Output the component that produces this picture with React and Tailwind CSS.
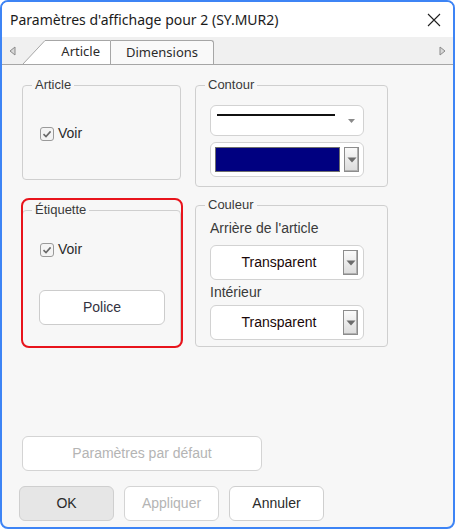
import React from "react";

const ui = { fontFamily: '"Liberation Sans", Arial, sans-serif' };
const seg = { fontFamily: '"Noto Sans", "Open Sans", sans-serif' };

function Check() {
  return (
    <span className="w-[14px] h-[14px] rounded-[3px] border border-[#9a9a9a] bg-[#f4f4f4] flex items-center justify-center">
      <svg width="10" height="10" viewBox="0 0 10 10">
        <path d="M1.5 5.2 L4 7.6 L8.6 2.4" fill="none" stroke="#6a6a6a" strokeWidth="1.6" />
      </svg>
    </span>
  );
}

function DropBtn() {
  return (
    <span className="w-[15px] h-[25px] border border-[#8c8c8c] bg-gradient-to-b from-[#fafafa] to-[#dcdcdc] flex items-center justify-center shadow-[inset_-1px_-1px_0_#b0b0b0]">
      <svg width="10" height="6" viewBox="0 0 10 6">
        <path d="M0.5 0.5 H9.5 L5 5.5 Z" fill="#6c6c6c" />
      </svg>
    </span>
  );
}

function Legend({ children }) {
  return (
    <legend className="ml-[9px] px-[3px] text-[13px] leading-[16px] text-[#3a3a3a]" style={ui}>
      {children}
    </legend>
  );
}

function ColorCombo({ text }) {
  return (
    <div className="ml-[14px] w-[154px] h-[35px] bg-white border border-[#d2d2d2] rounded-[6px] flex items-center pl-[4px]">
      <span className="flex-1 text-center text-[14px] text-[#1a0808]" style={ui}>{text}</span>
      <span className="mr-[5px]"><DropBtn /></span>
    </div>
  );
}

export default function App() {
  return (
    <div className="w-[455px] h-[529px] border-2 border-[#3d84f5] rounded-[8px] overflow-hidden flex flex-col bg-[#f7f7f7]">
      {/* Title bar */}
      <div className="h-[35px] bg-white flex items-center pl-[8px] pr-[12px] shrink-0">
        <span className="text-[14px] text-[#1b1b1b] flex-1" style={seg}>Paramètres d'affichage pour 2 (SY.MUR2)</span>
        <svg width="14" height="14" viewBox="0 0 14 14">
          <path d="M1 1 L13 13 M13 1 L1 13" stroke="#202020" strokeWidth="1.1" />
        </svg>
      </div>
      {/* Tab strip */}
      <div className="h-[28px] bg-[#f0f0f0] border-b border-[#a6a6a6] flex items-end shrink-0 relative">
        <span className="w-[21px] h-full flex items-center justify-center">
          <svg width="7" height="10" viewBox="0 0 7 10">
            <path d="M6 1 L1 5 L6 9 Z" fill="#d8d8d8" stroke="#8a8a8a" strokeWidth="1" />
          </svg>
        </span>
        <div className="relative h-[24px] w-[88px] flex items-center justify-end pr-[11px]">
          <svg className="absolute left-0 top-0" width="88" height="24" viewBox="0 0 88 24">
            <path d="M0 24 L22 0.5 H87.5 V24" fill="#ffffff" stroke="#a6a6a6" strokeWidth="1" />
          </svg>
          <span className="relative text-[13px] text-[#2b2b2b]" style={seg}>Article</span>
        </div>
        <div className="h-[24px] w-[103px] bg-[#f9f9f9] border border-b-0 border-l-0 border-[#a6a6a6] rounded-tr-[3px] flex items-center justify-center">
          <span className="text-[13px] text-[#2b2b2b]" style={seg}>Dimensions</span>
        </div>
        <span className="flex-1" />
        <span className="w-[22px] h-full flex items-center justify-center">
          <svg width="7" height="10" viewBox="0 0 7 10">
            <path d="M1 1 L6 5 L1 9 Z" fill="#d8d8d8" stroke="#8a8a8a" strokeWidth="1" />
          </svg>
        </span>
      </div>
      {/* Content */}
      <div className="flex-1 flex flex-col pl-[20px] pb-[6px]">
        <div className="flex gap-[14px]">
          {/* Left column */}
          <div className="w-[159px] flex flex-col">
            <fieldset className="mt-[12px] h-[103px] border border-[#cfcfcf] rounded-[4px]">
              <Legend>Article</Legend>
              <div className="flex items-center gap-[4px] ml-[17px] mt-[30px]">
                <Check />
                <span className="text-[14px] text-[#2a2a2a]" style={ui}>Voir</span>
              </div>
            </fieldset>
            <div className="relative mt-[22px]">
              <fieldset className="h-[145px] border border-[#cfcfcf] rounded-[4px]">
                <Legend>Étiquette</Legend>
                <div className="flex items-center gap-[4px] ml-[17px] mt-[21px]">
                  <Check />
                  <span className="text-[14px] text-[#2a2a2a]" style={ui}>Voir</span>
                </div>
                <button className="ml-[16px] mt-[30px] w-[126px] h-[35px] bg-white border border-[#cccccc] rounded-[6px] text-[14px] text-[#33333f]" style={ui}>
                  Police
                </button>
              </fieldset>
              <div className="absolute left-[-1px] top-[-4px] w-[162px] h-[150px] border-2 border-[#e8141c] rounded-[8px] pointer-events-none" />
            </div>
          </div>
          {/* Right column */}
          <div className="w-[193px] flex flex-col">
            <fieldset className="mt-[12px] h-[110px] border border-[#cfcfcf] rounded-[4px]">
              <Legend>Contour</Legend>
              <div className="ml-[14px] mt-[12px] w-[154px] h-[31px] bg-white border border-[#d2d2d2] rounded-[6px] flex items-start pt-[8px] pl-[6px]">
                <span className="w-[118px] h-[2px] bg-[#111]" />
                <svg className="ml-[13px] mt-[5px]" width="7" height="4" viewBox="0 0 7 4">
                  <path d="M0 0 H7 L3.5 4 Z" fill="#8a8a8a" />
                </svg>
              </div>
              <div className="ml-[14px] mt-[6px] w-[154px] h-[35px] bg-white border border-[#d2d2d2] rounded-[6px] flex items-center pl-[4px]">
                <span className="w-[125px] h-[25px] bg-[#000080] border border-[#6e6e6e]" />
                <span className="ml-[4px]"><DropBtn /></span>
              </div>
            </fieldset>
            <fieldset className="mt-[10px] h-[150px] border border-[#cfcfcf] rounded-[4px]">
              <Legend>Couleur</Legend>
              <div className="ml-[14px] mt-[6px] text-[14px] leading-[18px] text-[#3a3a3a]" style={ui}>Arrière de l'article</div>
              <div className="mt-[8px]"><ColorCombo text="Transparent" /></div>
              <div className="ml-[14px] mt-[3px] text-[14px] leading-[18px] text-[#3a3a3a]" style={ui}>Intérieur</div>
              <div className="mt-[4px]"><ColorCombo text="Transparent" /></div>
            </fieldset>
          </div>
        </div>
        <div className="flex-1" />
        <button className="w-[240px] h-[35px] bg-white border border-[#d4d4d4] rounded-[6px] text-[14px] text-[#b4b4b4]" style={ui}>
          Paramètres par défaut
        </button>
        <div className="flex gap-[10px] mt-[15px] ml-[-3px]">
          <button className="w-[95px] h-[35px] bg-[#e6e6e6] border border-[#cfcfcf] rounded-[6px] text-[14px] text-[#2a2a2a]" style={ui}>OK</button>
          <button className="w-[95px] h-[35px] bg-white border border-[#d4d4d4] rounded-[6px] text-[14px] text-[#b4b4b4]" style={ui}>Appliquer</button>
          <button className="w-[95px] h-[35px] bg-white border border-[#cfcfcf] rounded-[6px] text-[14px] text-[#2a2a2a]" style={ui}>Annuler</button>
        </div>
      </div>
    </div>
  );
}
